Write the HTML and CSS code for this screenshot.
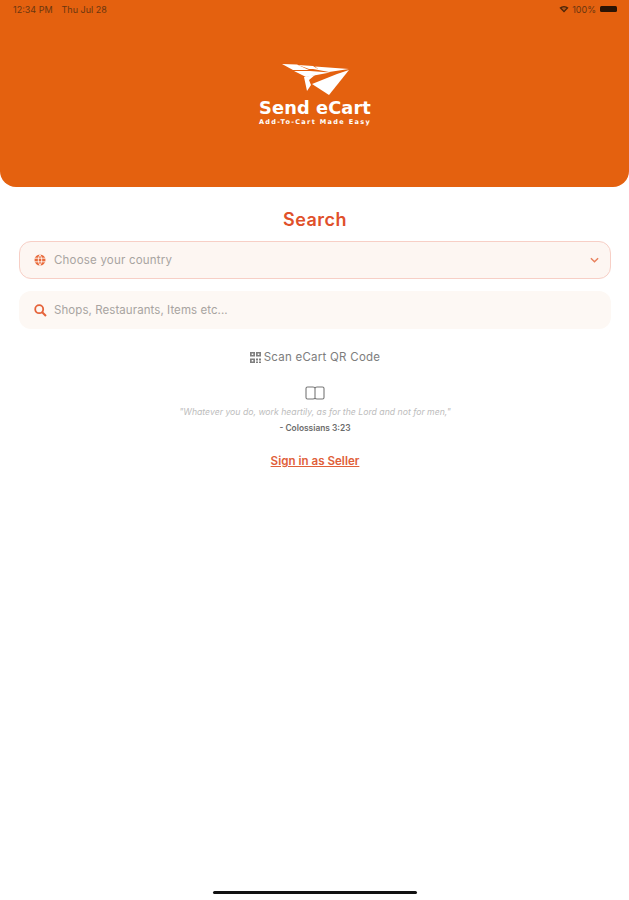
FILE: index.html
```html
<!DOCTYPE html>
<html lang="en">
<head>
    <meta charset="UTF-8">
    <meta name="viewport" content="width=device-width, initial-scale=1.0">
    <title>Send eCart</title>
    <link rel="stylesheet" href="styles.css">
</head>
<body>
    <div class="page">
        <header class="header">
            <div class="status-bar">
                <div class="status-left">
                    <span>12:34 PM</span>
                    <span>Thu Jul 28</span>
                </div>
                <div class="status-right">
                    <svg class="wifi" viewBox="0 0 12 9" width="10" height="8">
                        <path d="M0.500 3 Q6 -1.500 11.500 3 L6 8.800 Z" fill="#4a2408"/>
                        <path d="M3 3.300 Q6 1.500 9 3.300 L6 6.500 Z" fill="#b0561a"/>
                    </svg>
                    <span>100%</span>
                    <span class="battery"></span>
                </div>
            </div>
            <div class="brand">
                <svg class="plane" viewBox="0 0 68 32" width="68" height="32">
                    <path d="M0 0 L15 0.500 L27 6 L11 6 Z" fill="#fff"/>
                    <path d="M16 1 L31 2 L36 5 L27 5 Z" fill="#fff"/>
                    <path d="M33 2.500 L67 5 L47 8 L31 5 L36 5 Z" fill="#fff"/>
                    <path d="M12 7 L28 7 L48 8.500 L24 13 Z" fill="#fff"/>
                    <path d="M67 6 L47 31 L30 20 L55 10 Z" fill="#fff"/>
                    <path d="M22 13 L33 11 L27 16 L29 21 L25 27 Z" fill="#fff"/>
                </svg>
                <div class="brand-name">Send eCart</div>
                <div class="brand-tag">Add-To-Cart Made Easy</div>
            </div>
        </header>

        <main class="content">
            <h1 class="title">Search</h1>

            <div class="field field-select">
                <svg class="field-icon" viewBox="0 0 12 12" width="12" height="12">
                    <circle cx="6" cy="6" r="5.500" fill="#e8693a"/>
                    <path d="M0.500 4.200 H11.500 M0.500 7.800 H11.500 M6 0.500 Q2.500 6 6 11.500 Q9.500 6 6 0.500" fill="none" stroke="#fdf5f1" stroke-width="0.900"/>
                </svg>
                <span class="field-text">Choose your country</span>
                <svg class="chevron" viewBox="0 0 10 6" width="9" height="6">
                    <path d="M1 1 L5 5 L9 1" fill="none" stroke="#e8805c" stroke-width="1.600"/>
                </svg>
            </div>

            <div class="field field-search">
                <svg class="field-icon" viewBox="0 0 13 13" width="13" height="13">
                    <circle cx="5.200" cy="5.200" r="4" fill="none" stroke="#e5633a" stroke-width="1.800"/>
                    <path d="M8.200 8.200 L12 12" stroke="#e5633a" stroke-width="2"/>
                </svg>
                <span class="field-text">Shops, Restaurants, Items etc...</span>
            </div>

            <div class="scan">
                <svg viewBox="0 0 11 11" width="11" height="11">
                    <path d="M0 0 H5 V4.500 H0 Z M6 0 H11 V4.500 H6 Z M0 6.500 H5 V11 H0 Z M6 6.500 H8 V8.500 H6 Z M9 6.500 H11 V8.500 H9 Z M6 9.500 H8 V11 H6 Z M9 9.500 H11 V11 H9 Z" fill="#808080"/>
                    <path d="M1.700 1.500 H3.300 V3 H1.700 Z M7.700 1.500 H9.300 V3 H7.700 Z M1.700 8 H3.300 V9.500 H1.700 Z" fill="#fff"/>
                </svg>
                <span>Scan eCart QR Code</span>
            </div>

            <svg class="book" viewBox="0 0 20 14" width="20" height="14">
                <path d="M10 2.500 Q10 1 8 1 H2.500 Q1 1 1 2.500 V11.500 Q1 13 2.500 13 H8 Q9.500 13 10 12 Q10.500 13 12 13 H17.500 Q19 13 19 11.500 V2.500 Q19 1 17.500 1 H12 Q10 1 10 2.500 V12" fill="none" stroke="#777" stroke-width="1.100"/>
            </svg>

            <p class="quote">"Whatever you do, work heartily, as for the Lord and not for men,"</p>
            <p class="verse">- Colossians 3:23</p>

            <a class="seller" href="#">Sign in as Seller</a>
        </main>

        <div class="home-bar"></div>
    </div>
</body>
</html>
```

FILE: styles.css
```css
* {
    box-sizing: border-box;
}
body {
    margin: 0;
    background-color: #fff;
    font-family: "Inter", "Liberation Sans", sans-serif;
}
.page {
    display: flex;
    flex-direction: column;
    height: 900px;
    overflow: hidden;
}
.header {
    display: flex;
    flex-direction: column;
    align-items: center;
    height: 187px;
    flex-shrink: 0;
    padding: 4px 12px 0 13px;
    background-color: #e4610f;
    border-radius: 0 0 16px 16px;
}
.status-bar {
    display: flex;
    justify-content: space-between;
    align-items: center;
    width: 100%;
    height: 10px;
    font-size: 9px;
    color: #6a3610;
}
.status-left {
    display: flex;
    gap: 9px;
}
.status-right {
    display: flex;
    align-items: center;
    gap: 3px;
}
.battery {
    width: 17px;
    height: 6px;
    margin-left: 1px;
    border-radius: 1.500px;
    background-color: #2a1405;
}
.brand {
    display: flex;
    flex-direction: column;
    align-items: center;
    margin-top: 50px;
    color: #fff;
}
.plane {
    display: block;
    margin-left: 3px;
}
.brand-name {
    margin-top: 2px;
    font-family: "DejaVu Sans", sans-serif;
    font-size: 17.800px;
    font-weight: 700;
    line-height: 20px;
    letter-spacing: 0.100px;
}
.brand-tag {
    font-family: "DejaVu Sans", sans-serif;
    font-size: 6.500px;
    font-weight: 700;
    line-height: 8px;
    letter-spacing: 1.350px;
}
.content {
    display: flex;
    flex-direction: column;
    align-items: center;
    flex: 1;
    padding: 0 18px 0 19px;
}
.title {
    margin: 21px 0 0;
    font-size: 18px;
    font-weight: 600;
    line-height: 24px;
    letter-spacing: 0.500px;
    color: #e0502a;
}
.field {
    display: flex;
    align-items: center;
    width: 100%;
    height: 38px;
    padding: 0 11px 0 14px;
    border-radius: 12px;
    font-size: 11.500px;
    color: #a8a4a1;
}
.field-select {
    margin-top: 9px;
    background-color: #fdf6f2;
    border: 1px solid #f7cfc6;
}
.field-search {
    margin-top: 12px;
    background-color: #fdf8f4;
}
.field-icon {
    flex-shrink: 0;
}
.field-select .field-icon {
    margin-right: 8px;
}
.field-search .field-icon {
    margin: 0 7px 0 1px;
}
.field-text {
    flex: 1;
    letter-spacing: 0.200px;
}
.field-search .field-text {
    letter-spacing: 0.070px;
}
.scan {
    display: flex;
    align-items: center;
    gap: 3px;
    margin-top: 20px;
    font-size: 11.500px;
    line-height: 16px;
    letter-spacing: 0.250px;
    color: #7d7d7d;
}
.book {
    display: block;
    margin-top: 21px;
}
.quote {
    margin: 7px 0 0;
    font-size: 8.700px;
    font-style: italic;
    line-height: 11px;
    color: #bdbdbd;
}
.verse {
    margin: 5px 0 0;
    font-size: 8.400px;
    font-weight: 600;
    line-height: 11px;
    color: #6b6b6b;
}
.seller {
    margin-top: 20px;
    font-size: 11.600px;
    font-weight: 600;
    line-height: 15px;
    color: #e0603a;
    text-decoration: underline;
}
.home-bar {
    flex-shrink: 0;
    align-self: center;
    width: 204px;
    height: 3px;
    margin-bottom: 6px;
    border-radius: 2px;
    background-color: #111;
}
```
